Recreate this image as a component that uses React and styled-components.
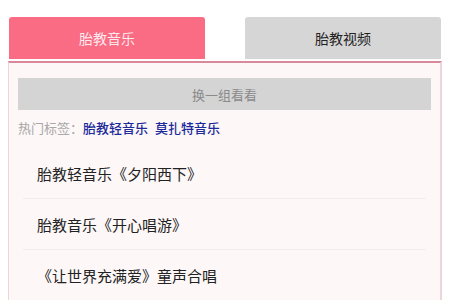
import React, { useState } from 'react'
import styled, { createGlobalStyle } from 'styled-components'

const GlobalStyle = createGlobalStyle`
    * { box-sizing: border-box; }
    body {
        margin: 0;
        background: #ffffff;
        font-family: "Microsoft YaHei", "Noto Sans CJK SC", "Liberation Sans", sans-serif;
    }
`

const tabs = ['胎教音乐', '胎教视频']
const tags = ['胎教轻音乐', '莫扎特音乐']
const songs = ['胎教轻音乐《夕阳西下》', '胎教音乐《开心唱游》', '《让世界充满爱》童声合唱']

const App = () => {
    const [active, setActive] = useState(0)

    return (
        <Page>
            <GlobalStyle />
            <TabRow>
                {tabs.map((t, i) => (
                    <Tab key={t} $active={i === active} onClick={() => setActive(i)}>{t}</Tab>
                ))}
            </TabRow>
            <Panel>
                <RefreshButton>换一组看看</RefreshButton>
                <TagLine>
                    <TagLabel>热门标签：</TagLabel>
                    {tags.map(t => <TagLink key={t}>{t}</TagLink>)}
                </TagLine>
                <SongList>
                    {songs.map(s => <SongItem key={s}>{s}</SongItem>)}
                </SongList>
            </Panel>
        </Page>
    )
}

const Page = styled.div`
    padding: 17px 8px 0 8px;
    width: 450px;
    height: 300px;
    overflow: hidden;
    display: flex;
    flex-direction: column;
`
const TabRow = styled.div`
    display: flex;
    justify-content: space-between;
    padding: 0 1px;
`
const Tab = styled.div`
    width: 196px;
    height: 42px;
    display: flex;
    align-items: center;
    justify-content: center;
    border-radius: 3px 3px 0 0;
    font-size: 14px;
    cursor: pointer;
    background: ${p => p.$active ? '#fa6b84' : '#d6d6d6'};
    color: ${p => p.$active ? '#ffe9ee' : '#222'};
`
const Panel = styled.div`
    flex: 1;
    margin-top: 2px;
    border-top: 2px solid #d9899a;
    border-left: 1px solid #f3d3da;
    border-right: 2px solid #ecd6dc;
    background: #fdf7f7;
    padding: 15px 9px 0 9px;
`
const RefreshButton = styled.div`
    height: 32px;
    background: #d4d4d4;
    color: #8a8a8a;
    font-size: 13px;
    display: flex;
    align-items: center;
    justify-content: center;
`
const TagLine = styled.div`
    margin-top: 8px;
    font-size: 13px;
    display: flex;
    gap: 7px;
    align-items: center;
`
const TagLabel = styled.span`
    color: #a8a8a8;
    margin-right: -7px;
`
const TagLink = styled.span`
    color: #1c2a9a;
    font-weight: 500;
`
const SongList = styled.div`
    margin-top: 11px;
`
const SongItem = styled.div`
    margin: 0 5px;
    height: 51px;
    padding-left: 14px;
    display: flex;
    align-items: center;
    font-size: 15px;
    color: #222;
    border-bottom: 1px solid #f2ecec;
`

export default App
